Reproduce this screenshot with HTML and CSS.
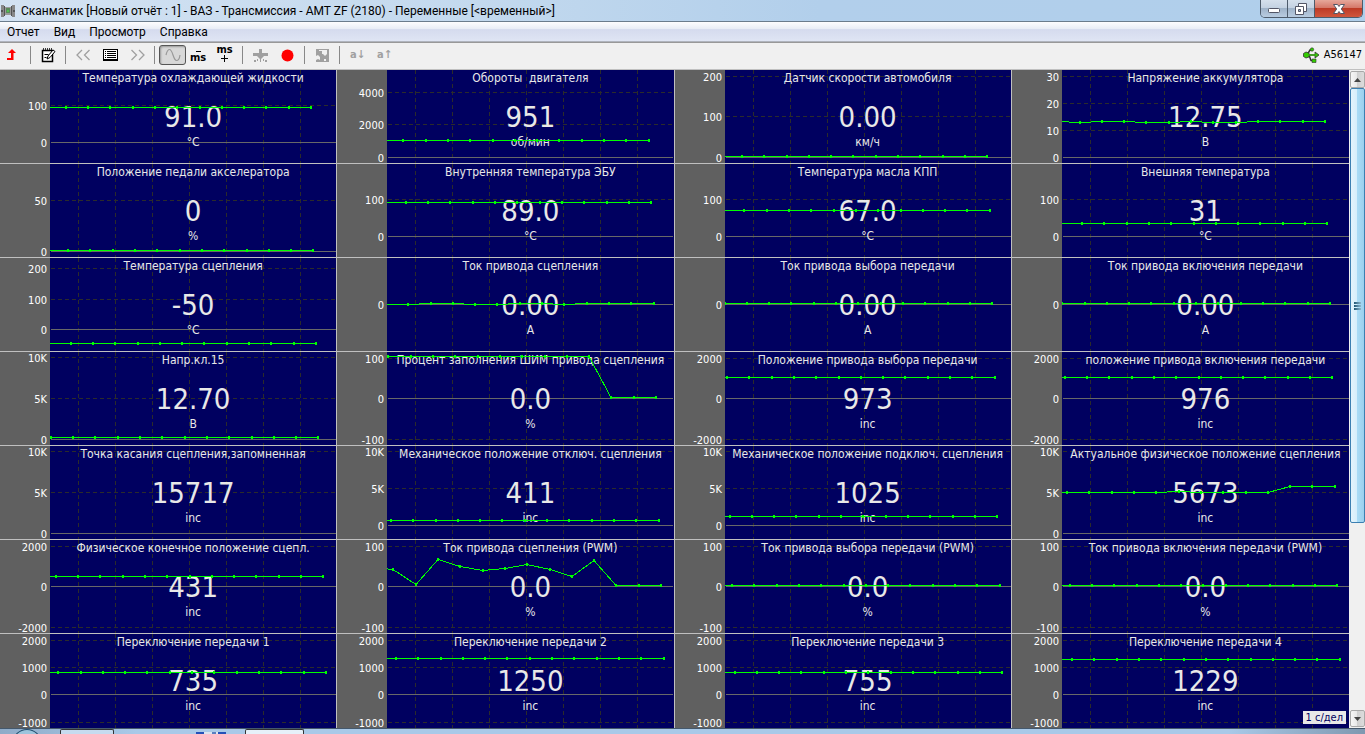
FILE: index.html
```html
<!DOCTYPE html>
<html lang="ru">
<head>
<meta charset="utf-8">
<title>Сканматик</title>
<link rel="stylesheet" href="styles.css">
</head>
<body>
<header class="titlebar">
  <svg class="app-icon" width="14" height="14" viewBox="0 0 14 14" shape-rendering="crispEdges"><path fill="#888" d="M0 1h3v12H0zM11 1h3v12h-3z"/><path fill="#999" d="M3 3h8v8H3z"/><path fill="#555" d="M3 2h1v10H3zM10 2h1v10h-1zM0 6h2v2H0zM12 6h2v2h-2z"/><path fill="#5a8a5a" d="M5 4h4v5H5z"/><path fill="#4fc04f" d="M6 6h2v2H6z"/></svg>
  <h1 class="title">Сканматик [Новый отчёт : 1] - ВАЗ - Трансмиссия - AMT ZF (2180) - Переменные [&lt;временный&gt;]</h1>
  <div class="window-buttons">
    <button class="wbtn" aria-label="Свернуть"><svg width="14" height="14" viewBox="0 0 14 14"><rect x="1.500" y="6.500" width="11" height="4" rx="1" fill="#fff" stroke="#535666"/></svg></button>
    <button class="wbtn" aria-label="Развернуть"><svg width="14" height="14" viewBox="0 0 14 14"><g fill="#fff" stroke="#535666"><path d="M4.500 1.500h8v8h-8z"/><path d="M1.500 4.500h8v8h-8z"/><path fill="#9fb4cc" d="M4.500 7.500h2v2h-2z"/></g></svg></button>
    <button class="wbtn wbtn-close" aria-label="Закрыть"><svg width="14" height="14" viewBox="0 0 14 14"><path fill="#fff" stroke="#535666" d="M1.500 2.500h4L7 4.500l1.500-2h4L9.300 7l3.200 4.500h-4L7 9.500l-1.500 2h-4L4.700 7z"/></svg></button>
  </div>
</header>
<nav class="menubar">
  <a href="#">Отчет</a><a href="#">Вид</a><a href="#">Просмотр</a><a href="#">Справка</a>
</nav>
<div class="toolbar">
  <button class="tool" aria-label="Вверх"><svg width="14" height="14" viewBox="0 0 14 14"><path fill="#f00" d="M7 1l4 4H8.500v7H2v-2h4V5H3z"/></svg></button>
  <span class="sep"></span>
  <button class="tool" aria-label="Правка"><svg width="15" height="15" viewBox="0 0 15 15"><path fill="#fff" stroke="#000" stroke-width="1.500" d="M1.500 2.500h10v11h-10z"/><path stroke="#000" stroke-width="1.500" stroke-dasharray="1 1" d="M2 1h10"/><path stroke="#000" d="M3.500 6.500h4M3.500 9.500h2"/><path fill="#fff" stroke="#000" d="M6 11l1-3 5-6 2 1.500-5 6z"/></svg></button>
  <span class="sep"></span>
  <button class="tool" aria-label="Назад"><svg width="15" height="12" viewBox="0 0 15 12"><path fill="none" stroke="#a0a0a0" stroke-width="1.300" d="M6 1L1 6l5 5M13.500 1l-5 5 5 5"/></svg></button>
  <button class="tool" aria-label="Список"><svg width="15" height="12" viewBox="0 0 15 12" shape-rendering="crispEdges"><path fill="#fff" stroke="#000" d="M.5.5h14v10H.5zM0 11.500h15"/><path stroke="#000" d="M2 2.500h1M4 2.500h9M2 4.500h1M4 4.500h9M2 6.500h1M4 6.500h9M2 8.500h1M4 8.500h9"/></svg></button>
  <button class="tool" aria-label="Вперёд"><svg width="15" height="12" viewBox="0 0 15 12"><path fill="none" stroke="#a0a0a0" stroke-width="1.300" d="M1.500 1l5 5-5 5M9 1l5 5-5 5"/></svg></button>
  <span class="sep"></span>
  <button class="tool tool-on" aria-label="График"><svg width="16" height="14" viewBox="0 0 16 14"><path fill="none" stroke="#999" stroke-width="1.200" d="M1 7C2 3 3 1.500 4.500 1.500S7 4 8 7s2 5.500 3.500 5.500S14.500 11 15 7"/></svg></button>
  <button class="tool ms ms-minus" aria-label="Меньше миллисекунд"><svg width="5" height="1" viewBox="0 0 5 1"><path d="M0 0h5v1H0z"/></svg>ms</button>
  <button class="tool ms ms-plus" aria-label="Больше миллисекунд">ms<svg width="7" height="7" viewBox="0 0 7 7"><path d="M3 0h1v3h3v1H4v3H3V4H0V3h3z"/></svg></button>
  <span class="sep"></span>
  <button class="tool" aria-label="Маркер"><svg width="17" height="13" viewBox="0 0 17 13"><path fill="#a0a0a0" d="M7 0h3v4h6v3h-4l-3 3H8L5 7H1V4h6zM2 11h2v2H2zM5 10h1v2H5zM8 10h1v3H8zM11 10h1v2h-1zM13 11h2v2h-2z"/></svg></button>
  <button class="tool" aria-label="Запись"><svg width="13" height="13" viewBox="0 0 13 13"><circle cx="6.500" cy="6.500" r="6" fill="#f00"/></svg></button>
  <span class="sep"></span>
  <button class="tool" aria-label="Сохранить"><svg width="13" height="13" viewBox="0 0 13 13"><path fill="#a0a0a0" d="M0 0h13v13H0z"/><path fill="#f0f0f0" d="M3 1h8v4L9 7 7 5H3zM0 7l2-1 2 2v3l-2-1-2 1zM8 10h2v2H8z"/><path fill="#a0a0a0" d="M3 2h3v3H3z"/></svg></button>
  <span class="sep"></span>
  <button class="tool font-size">a↓</button>
  <button class="tool font-size">a↑</button>
  <div class="device">
    <svg width="17" height="17" viewBox="0 0 17 17"><path fill="none" stroke="#333" stroke-width="1.500" d="M4 8h10M4 8l3-5h2M6 8l2 5.500h2"/><path fill="#3c0" stroke="#333" stroke-width=".8" d="M.5 6.500L3 5l3 1v4l-3 1-2.500-1.500zM12 5l4 3-4 3z"/><circle cx="9" cy="2.500" r="1.700" fill="#3c0" stroke="#333" stroke-width=".6"/><path fill="#3c0" stroke="#333" stroke-width=".6" d="M9 12h4v3.500H9z"/><path stroke="#3c0" stroke-width="1.200" d="M5 8h9"/></svg>
    <span>A56147</span>
  </div>
</div>
<div class="workspace">
  <main class="charts" id="charts"></main>
  <div class="scrollbar">
    <button class="sb-btn" aria-label="Прокрутить вверх"><svg width="7" height="4" viewBox="0 0 7 4"><path fill="#444" d="M0 4l3.500-4L7 4z"/></svg></button>
    <div class="sb-track"><div class="sb-thumb"><i></i><i></i><i></i></div></div>
    <button class="sb-btn" aria-label="Прокрутить вниз"><svg width="7" height="4" viewBox="0 0 7 4"><path fill="#444" d="M0 0l3.500 4L7 0z"/></svg></button>
  </div>
  <div class="time-scale">1 с/дел</div>
</div>
<footer class="taskbar"><span class="orb"></span><span class="task"></span><span class="pinned"></span><span class="task task-active"></span></footer>
<script src="charts.js"></script>
</body>
</html>
```
FILE: styles.css
```css
* { box-sizing: border-box; }
body {
  margin: 0;
  height: 100vh;
  display: flex;
  flex-direction: column;
  overflow: hidden;
  background: #f0f0f0;
  font: 12px/14px "DejaVu Sans Condensed", "DejaVu Sans", sans-serif;
  color: #000;
}
button { margin: 0; padding: 0; border: 0; background: none; font: inherit; color: inherit; }
svg { display: block; }

.titlebar {
  flex: none;
  height: 22px;
  display: flex;
  align-items: center;
  padding: 0 2px 0 1px;
  gap: 6px;
  background: linear-gradient(90deg, #d3e2f2 0, #c3d9ee 35%, #b2cfeb 60%, #b0cfeb 100%);
  border-bottom: 1px solid #6b7c8c;
}
.title { margin: 0; font: 12px/20px Roboto, "Noto Sans", sans-serif; white-space: nowrap; }
.window-buttons {
  display: flex;
  align-self: flex-start;
  margin-left: auto;
  height: 18px;
  border: 1px solid #4d5b6b;
  border-top: 0;
  border-radius: 0 0 5px 5px;
  overflow: hidden;
}
.wbtn {
  width: 27px;
  display: flex;
  align-items: center;
  justify-content: center;
  border-right: 1px solid #4d5b6b;
  background: linear-gradient(#d5e0ec 0, #c4d2e2 45%, #9fb3c9 50%, #b9cce0 100%);
}
.wbtn-close { width: 47px; border-right: 0; background: linear-gradient(#e6a79b 0, #d5786a 45%, #bd3a26 50%, #d0563c 100%); }

.menubar {
  flex: none;
  height: 20px;
  display: flex;
  gap: 14px;
  padding: 0 7px;
  background: linear-gradient(#fdfdfe 0, #e9edf6 35%, #d5dbee 40%, #dfe5f4 100%);
  border-bottom: 1px solid #b0b4bd;
}
.menubar a { color: #000; text-decoration: none; font: 12px/20px Roboto, "Noto Sans", sans-serif; }

.toolbar {
  flex: none;
  height: 27px;
  display: flex;
  align-items: center;
  padding-bottom: 2px;
  background: #f0f0f0;
  border-top: 1px solid #989898;
}
.tool { width: 27px; height: 20px; display: flex; align-items: center; justify-content: center; }
.tool:first-child { padding-right: 4px; }
.tool-on { border: 1px solid #555; border-radius: 3px; background: #d8d8d8; box-shadow: inset 1px 1px 2px #999; }
.sep { width: 1px; height: 18px; margin: 0 4px 0 3px; background: #888; }
.ms { flex-direction: column; font: bold 11px/11px "DejaVu Sans Condensed", "DejaVu Sans", sans-serif; }
.ms-minus { width: 24px; align-self: flex-end; }
.ms-plus { width: 29px; align-self: flex-start; }
.font-size { font-weight: bold; font-size: 11px; color: #a0a0a0; }
.device { display: flex; align-items: center; gap: 4px; margin-left: auto; padding-right: 3px; font: 11px/14px "DejaVu Sans Condensed", sans-serif; }

.workspace { position: relative; flex: 1; min-height: 0; display: flex; border-top: 1px solid #c0c0c0; }
.charts {
  flex: 1;
  display: grid;
  grid-template-columns: repeat(4, 1fr);
  grid-auto-rows: 94px;
  background: #000060;
  overflow: hidden;
}
.chart {
  display: grid;
  grid-template-columns: 50px minmax(0, 1fr);
  grid-template-rows: minmax(0, 1fr);
  min-width: 0;
  border-right: 1px solid #c0c0c0;
  border-bottom: 1px solid #c0c0c0;
}
.chart:nth-child(4n) { border-right: 0; }
.chart:nth-last-child(-n+4) { border-bottom: 0; }
.axis { width: 50px; height: 100%; overflow: visible; background: #606060; }
.axis text { fill: #fff; font-size: 11px; text-anchor: end; }
.plot { display: grid; grid-template: minmax(0, 1fr) / minmax(0, 1fr); overflow: hidden; }
.plot > * { grid-area: 1 / 1; }
.lines, .trace { width: 100%; height: 100%; shape-rendering: crispEdges; }
.grid-line { stroke: #2b2b2b; stroke-dasharray: 4 3; }
.zero-line { stroke: #686868; }
.trace polyline { fill: none; stroke: #0f0; }
.trace rect { fill: #0f0; }
.readout { text-align: center; color: #e8e8e8; white-space: pre; }
.name { margin: 0; font: inherit; line-height: 16px; }
.value { display: block; font-size: 29px; line-height: 32px; padding: 15px 0 1px; }
.unit { display: block; line-height: 16px; }

.time-scale { position: absolute; right: 19px; bottom: 4px; padding: 0 3px; background: #e8e8e8; color: #000060; font-size: 11px; line-height: 13px; }

.scrollbar { flex: none; width: 16px; display: flex; flex-direction: column; padding: 1px 0 1px 1px; background: #f0f0f0; }
.sb-btn { height: 17px; display: flex; align-items: center; justify-content: center; border: 1px solid #a8a8a8; border-radius: 2px; background: linear-gradient(90deg, #f6f6f6 0, #e8e8e8 45%, #d0d0d0 50%, #dcdcdc 100%); }
.sb-track { flex: 1; }
.sb-thumb {
  height: 70%;
  display: flex;
  flex-direction: column;
  align-items: center;
  justify-content: center;
  gap: 1px;
  border: 1px solid #3c7fb1;
  border-radius: 2px;
  background: linear-gradient(90deg, #e3f4fc 0, #d6eefb 45%, #a9dbf5 50%, #9bd0ee 100%);
}
.sb-thumb i { width: 7px; height: 2px; background: linear-gradient(90deg, #1f5674, #8fb6cc); }

.taskbar { flex: none; height: 6px; display: flex; padding-left: 13px; border-top: 1px solid #44586c; background: linear-gradient(90deg, #8fabc8 0, #a9c9e8 10%, #a9c9e8 90%, #7f98b0 100%); }
.orb { width: 28px; height: 26px; border: 1px solid #24506f; border-radius: 50%; background: #9cc4dc; }
.task { width: 54px; margin-left: 19px; border: 1px solid #333; border-bottom: 0; border-radius: 2px 2px 0 0; background: #c6dbef; }
.pinned { width: 30px; height: 2px; margin: 3px 0 0 82px; background: linear-gradient(90deg, #2450b8 0 8px, #dde4ee 8px 16px, #5a80c0 16px 20px, #dde4ee 20px 22px, #2450b8 22px); }
.task-active { width: 59px; background: #e6f0f9; }
```
FILE: charts.js
```javascript
const SPACING = 22.3;
const temp = [["100", 35], ["0", 72]];
const amps = [["0", 46]];
const pct = [["100", 6], ["0", 46], ["-100", 87]];
const inc2 = [["2000", 6], ["0", 46], ["-2000", 87]];
const gear = [["2000", 6], ["1000", 33], ["0", 60], ["-1000", 88]];
const tenK = [["10K", 5], ["5K", 46], ["0", 87]];
const tenKHigh = [["10K", 5], ["5K", 42], ["0", 79]];

// [name, value, unit, axis ticks, trace heights (the first one repeats to the left)]
const charts = [
  ["Температура охлаждающей жидкости", "91.0", "°C", temp, [37]],
  ["Обороты  двигателя", "951", "об/мин", [["4000", 22], ["2000", 54], ["0", 87]], [70]],
  ["Датчик скорости автомобиля", "0.00", "км/ч", [["200", 6], ["100", 46], ["0", 87]], [86]],
  ["Напряжение аккумулятора", "12.75", "В", [["30", 6], ["20", 33], ["10", 60], ["0", 87]], [51, 52, 51, 51, 52, 52, 51, 52, 52, 51, 51, 51, 51]],
  ["Положение педали акселератора", "0", "%", [["50", 36], ["0", 87]], [86]],
  ["Внутренняя температура ЭБУ", "89.0", "°C", temp, [38]],
  ["Температура масла КПП", "67.0", "°C", temp, [46]],
  ["Внешняя температура", "31", "°C", temp, [59]],
  ["Температура сцепления", "-50", "°C", [["200", 10], ["100", 41], ["0", 71]], [85]],
  ["Ток привода сцепления", "0.00", "A", amps, [46, 45, 45, 46, 46, 45, 45, 46, 45, 45, 45, 45]],
  ["Ток привода выбора передачи", "0.00", "A", amps, [45]],
  ["Ток привода включения передачи", "0.00", "A", amps, [45]],
  ["Напр.кл.15", "12.70", "В", tenK, [85]],
  ["Процент заполнения ШИМ привода сцепления", "0.0", "%", pct, [4, 45, 45, 45]],
  ["Положение привода выбора передачи", "973", "inc", inc2, [25]],
  ["положение привода включения передачи", "976", "inc", inc2, [25]],
  ["Точка касания сцепления,запомненная", "15717", "inc", tenK, []],
  ["Механическое положение отключ. сцепления", "411", "inc", tenKHigh, [74]],
  ["Механическое положение подключ. сцепления", "1025", "inc", tenKHigh, [70]],
  ["Актуальное физическое положение сцепления", "5673", "inc", tenK, [46, 45, 46, 46, 46, 46, 40, 40, 40]],
  ["Физическое конечное положение сцепл.", "431", "inc", inc2, [36]],
  ["Ток привода сцепления (PWM)", "0.0", "%", pct, [27, 29, 44, 19, 26, 30, 28, 24, 29, 36, 20, 45, 45, 45]],
  ["Ток привода выбора передачи (PWM)", "0.0", "%", pct, [45]],
  ["Ток привода включения передачи (PWM)", "0.0", "%", pct, [45]],
  ["Переключение передачи 1", "735", "inc", gear, [38]],
  ["Переключение передачи 2", "1250", "inc", gear, [24]],
  ["Переключение передачи 3", "755", "inc", gear, [38]],
  ["Переключение передачи 4", "1229", "inc", gear, [25]],
];

function gridLines(ticks) {
  let out = "";
  for (let x = 28; x < 1200; x += 37) {
    out += `<line class="grid-line" x1="${x}" x2="${x}" y1="0" y2="94"/>`;
  }
  for (const [label, y] of ticks) {
    const kind = label === "0" ? "zero-line" : "grid-line";
    out += `<line class="${kind}" x1="1" x2="100%" y1="${y + 0.5}" y2="${y + 0.5}"/>`;
  }
  return out;
}

function trace(heights, index) {
  if (!heights.length) return "";
  const last = 261 + index * 0.62;
  const points = [];
  let dots = "";
  for (let k = 0; last - k * SPACING > -SPACING; k++) {
    const x = Math.round(last - k * SPACING);
    const y = heights[Math.max(0, heights.length - 1 - k)];
    points.push(`${x},${y + 0.5}`);
    dots += `<rect x="${x - 1}" y="${y - 1}" width="2" height="3"/>`;
  }
  return `<polyline points="${points.join(" ")}"/>${dots}`;
}

document.getElementById("charts").innerHTML = charts.map(([name, value, unit, ticks, heights], i) => `
  <section class="chart">
    <svg class="axis">${ticks.map(([t, y]) => `<text x="47" y="${y + 5}">${t}</text>`).join("")}</svg>
    <div class="plot">
      <svg class="lines">${gridLines(ticks)}</svg>
      <div class="readout"><h2 class="name">${name}</h2><span class="value">${value}</span><span class="unit">${unit}</span></div>
      <svg class="trace">${trace(heights, i)}</svg>
    </div>
  </section>`).join("");
```
